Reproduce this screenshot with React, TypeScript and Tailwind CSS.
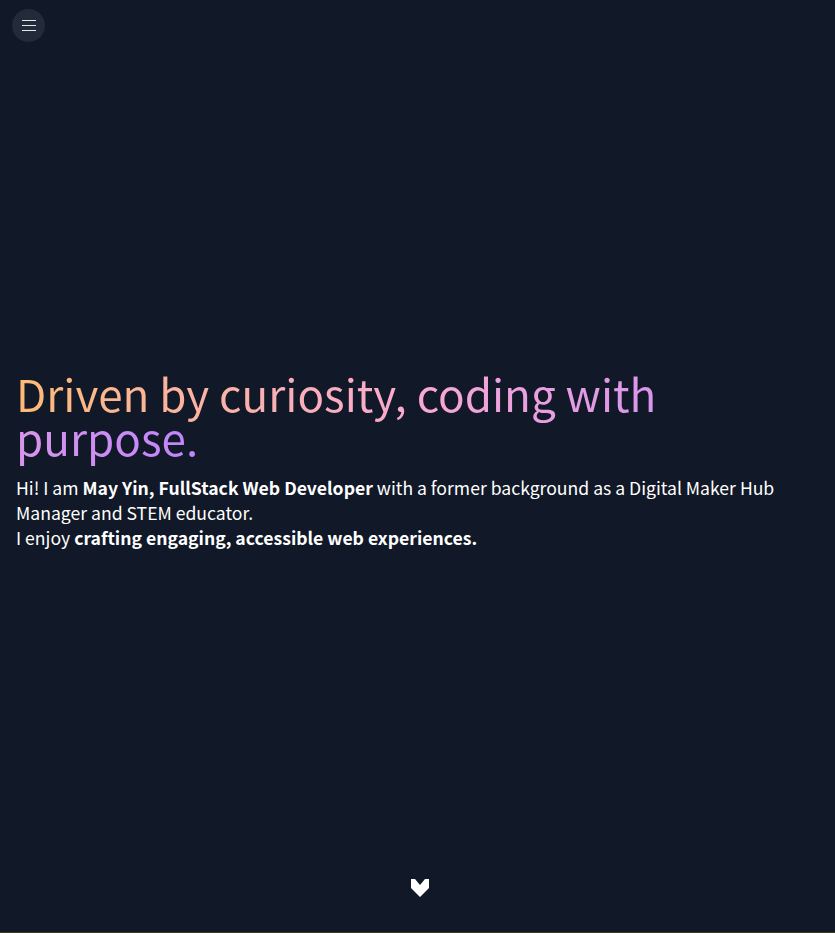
import React from "react";

export default function App() {
  return (
    <div
      className="bg-[#111827] text-white min-h-screen"
      style={{ fontFamily: '"Noto Sans CJK JP", "Noto Sans", sans-serif' }}
    >
      <section className="relative h-[932px] flex flex-col justify-center px-4">
        <button className="absolute top-[9px] left-[12px] w-[33px] h-[33px] rounded-full bg-[#222b3a] flex flex-col items-center justify-center gap-[3.5px]">
          <span className="block w-[14px] h-[1.5px] bg-[#e5e7eb]" />
          <span className="block w-[14px] h-[1.5px] bg-[#e5e7eb]" />
          <span className="block w-[14px] h-[1.5px] bg-[#e5e7eb]" />
        </button>

        <div className="mb-[12px]">
          <h1 className="text-[44px] leading-[44px] font-normal">
            <span className="bg-gradient-to-r from-[#fdba74] via-[#f9a8d4] to-[#c084fc] bg-clip-text text-transparent">
              Driven by curiosity, coding with purpose.
            </span>
          </h1>
          <p className="mt-[16px] text-[17.6px] leading-[25px] text-white">
            Hi! I am <strong className="font-bold">May Yin, FullStack Web Developer</strong> with a former
            background as a Digital Maker Hub Manager and STEM educator.
            <br />I enjoy <strong className="font-bold">crafting engaging, accessible web experiences.</strong>
          </p>
        </div>

        <div className="absolute bottom-[35px] left-0 right-0 flex justify-center">
          <svg width="18" height="18" viewBox="0 0 18 18" className="ml-[4px]">
            <polygon points="0,0 4,0 9,6 14,0 18,0 18,9 9,18 0,9" fill="#ffffff" />
          </svg>
        </div>
      </section>
      <div className="h-[1px] bg-[#3d3a22]" />
    </div>
  );
}
